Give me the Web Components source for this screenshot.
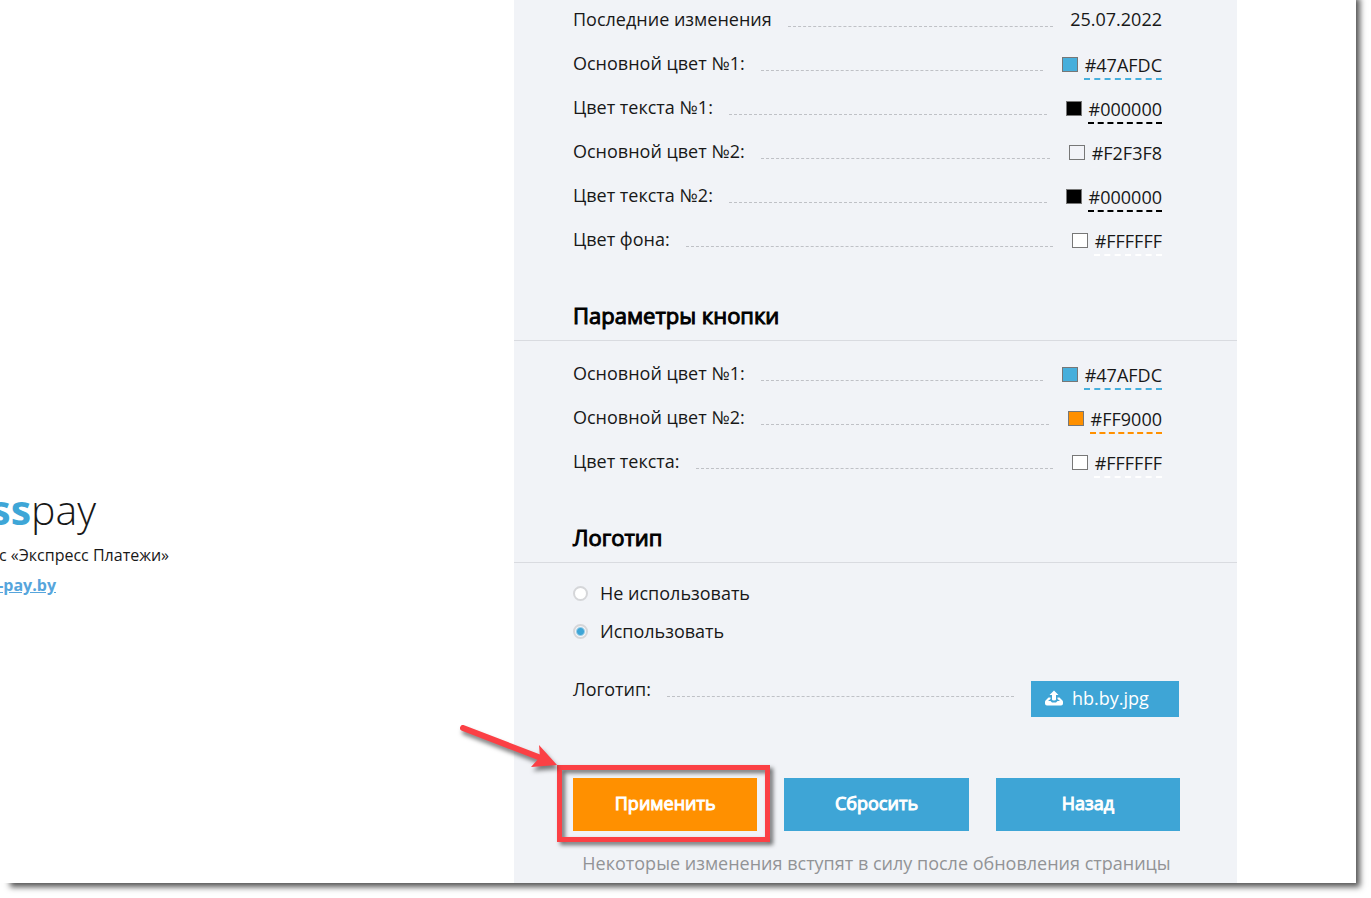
<!DOCTYPE html>
<html lang="ru">
<head>
<meta charset="utf-8">
<title>Express Pay</title>
<style>
body {
  margin: 0;
  background: #fff;
  color: #181818;
  font-family: "Open Sans", "Noto Sans", sans-serif;
  font-weight: 400;
  font-size: 18px;
  overflow: hidden;
}
</style>
</head>
<body>
<settings-page>
  <brand-block slot="brand"></brand-block>
  <div>
    <param-row label="Последние изменения">25.07.2022</param-row>
    <param-row label="Основной цвет №1:" color="#47AFDC"></param-row>
    <param-row label="Цвет текста №1:" color="#000000"></param-row>
    <param-row label="Основной цвет №2:" color="#F2F3F8"></param-row>
    <param-row label="Цвет текста №2:" color="#000000"></param-row>
    <param-row label="Цвет фона:" color="#FFFFFF"></param-row>
  </div>
  <param-section heading="Параметры кнопки">
    <param-row label="Основной цвет №1:" color="#47AFDC"></param-row>
    <param-row label="Основной цвет №2:" color="#FF9000"></param-row>
    <param-row label="Цвет текста:" color="#FFFFFF"></param-row>
  </param-section>
  <param-section heading="Логотип">
    <logo-choice></logo-choice>
    <param-row label="Логотип:" wide><upload-button>hb.by.jpg</upload-button></param-row>
  </param-section>
  <form-actions>Некоторые изменения вступят в силу после обновления страницы</form-actions>
</settings-page>

<script>
class SettingsPage extends HTMLElement {
  constructor() {
    super();
    this.attachShadow({ mode: "open" }).innerHTML = `
<style>
:host {
  display: grid;
  grid-template-columns: minmax(0, 514fr) minmax(0, 723fr) minmax(0, 119fr);
  box-sizing: border-box;
  min-height: calc(100vh - 3px);
  margin: -12px 15px 15px 0;
  padding-top: 12px;
  background: #fff;
  box-shadow: 7px 7px 6px -3px #555;
}
main {
  background: #f1f3f7;
}
</style>
<aside><slot name="brand"></slot></aside>
<main><slot></slot></main>
`;
  }
}

class BrandBlock extends HTMLElement {
  constructor() {
    super();
    this.attachShadow({ mode: "open" }).innerHTML = `
<style>
:host {
  display: block;
  padding-top: 480px;
  overflow: hidden;
  white-space: nowrap;
}
div {
  display: flex;
  justify-content: flex-end;
}
.logo {
  width: 96px;
  font-size: 41px;
  line-height: 58px;
  padding-bottom: 2px;
  font-weight: 300;
}
.logo b {
  color: #3ea6d7;
  font-weight: 700;
}
.name {
  width: 169px;
  font-size: 16px;
  line-height: 30px;
}
.link {
  width: 56px;
  font-size: 16px;
  line-height: 30px;
}
a {
  color: #56a5dc;
  font-weight: 700;
}
</style>
<div class="logo"><b>ss</b><span>pay</span></div>
<div class="name">ис «Экспресс Платежи»</div>
<div class="link"><a href="#">-pay.by</a></div>
`;
  }
}

class ParamSection extends HTMLElement {
  constructor() {
    super();
    this.attachShadow({ mode: "open" }).innerHTML = `
<style>
:host {
  display: block;
}
h2 {
  margin: 0 0 13px;
  padding: 34px 59px 8px;
  border-bottom: 1px solid #d9dbe0;
  color: #000;
  font-size: 22px;
  line-height: 34px;
  font-weight: 400;
  -webkit-text-stroke: 1px currentColor;
}
</style>
<h2>${this.getAttribute("heading")}</h2>
<slot></slot>
`;
  }
}

class ParamRow extends HTMLElement {
  constructor() {
    super();
    const label = this.getAttribute("label");
    const color = this.getAttribute("color");
    const value = color
      ? `<input id="color" type="color" value="${color}"><span class="code">${color}</span>`
      : `<span class="plain"><slot></slot></span>`;

    this.attachShadow({ mode: "open" }).innerHTML = `
<style>
:host {
  display: flex;
  align-items: flex-start;
  height: 44px;
  padding: 0 75px 0 59px;
  line-height: 38px;
}
:host([wide]) {
  padding-right: 58px;
}
.leader {
  flex: 1;
  height: 26px;
  margin: 0 17px 0 16px;
  border-bottom: 1px dashed #bfc1c6;
}
input {
  appearance: none;
  box-sizing: border-box;
  width: 16px;
  height: 15px;
  margin: 13px 6px 0 2px;
  padding: 0;
  border: 1px solid #777;
  background: none;
}
input::-webkit-color-swatch-wrapper {
  padding: 0;
}
input::-webkit-color-swatch {
  border: 0;
  border-radius: 0;
}
.code {
  margin-top: 9px;
  padding: 0 0 1px 1px;
  border-bottom: 2px dashed ${color || "transparent"};
  line-height: 24px;
}
</style>
${color ? `<label for="color">${label}</label>` : `<span>${label}</span>`}
<span class="leader"></span>
${value}
`;
  }
}

class LogoChoice extends HTMLElement {
  constructor() {
    super();
    this.attachShadow({ mode: "open" }).innerHTML = `
<style>
:host {
  display: block;
  margin: -2px 0 20px;
  padding: 0 59px;
}
label {
  display: flex;
  align-items: center;
  gap: 12px;
  line-height: 38px;
}
input {
  appearance: none;
  box-sizing: border-box;
  width: 15px;
  height: 15px;
  margin: 0;
  border: 2px solid #d5d6d9;
  border-radius: 50%;
  background: #fff;
}
input:checked {
  background: radial-gradient(circle, #3ea5d6 3px, #f4f5f8 5px);
}
</style>
<label><input type="radio" name="logo">Не использовать</label>
<label><input type="radio" name="logo" checked>Использовать</label>
`;
  }
}

class UploadButton extends HTMLElement {
  constructor() {
    super();
    this.attachShadow({ mode: "open" }).innerHTML = `
<style>
:host {
  display: block;
  padding-top: 11px;
}
button {
  display: flex;
  align-items: center;
  gap: 9px;
  box-sizing: border-box;
  width: 148px;
  height: 36px;
  padding: 0 14px 2px;
  border: 0;
  background: #3ea5d6;
  color: #fff;
  font: inherit;
}
svg {
  width: 18px;
  height: 16px;
  fill: #fff;
}
</style>
<button type="button">
  <svg viewBox="0 0 18 16" aria-hidden="true">
    <path d="M9 .5 13.500 5H11V9.500Q11 10.500 9 10.500T7 9.500V5H4.500Z"/>
    <path d="M3.500 7.500H5.500V9L3 11H5.500L7 12.500H11L12.500 11H15L12.500 9V7.500H14.500L17.500 10.500Q18 11 18 12V13.500Q18 15.500 16 15.500H2Q0 15.500 0 13.500V12Q0 11 .5 10.500Z"/>
  </svg>
  <slot></slot>
</button>
`;
  }
}

class FormActions extends HTMLElement {
  constructor() {
    super();
    this.attachShadow({ mode: "open" }).innerHTML = `
<style>
:host {
  display: block;
  padding: 64px 57px 0 59px;
}
.buttons {
  display: grid;
  grid-template-columns: repeat(3, 1fr);
  gap: 27px;
}
.marked {
  position: relative;
}
button {
  width: 100%;
  height: 53px;
  padding: 0 0 4px;
  border: 0;
  background: #3ea5d6;
  color: #fff;
  font: inherit;
  -webkit-text-stroke: 1px currentColor;
}
.primary {
  background: #ff9000;
}
.frame {
  position: absolute;
  inset: -13px -13px -11px -16px;
  border: 5px solid #fb4045;
  filter: drop-shadow(3px 3px 2px rgba(0, 0, 0, .55));
  pointer-events: none;
}
.arrow {
  position: absolute;
  left: -116px;
  top: -56px;
  width: 110px;
  height: 56px;
  filter: drop-shadow(2px 4px 2px rgba(0, 0, 0, .5));
  pointer-events: none;
}
p {
  margin: 17px 0 0;
  color: #929396;
  line-height: 30px;
  text-align: center;
  white-space: nowrap;
}
</style>
<div class="buttons">
  <div class="marked">
    <button class="primary" type="submit">Применить</button>
    <span class="frame"></span>
    <svg class="arrow" viewBox="0 0 110 56" aria-hidden="true">
      <path d="M6 6 84 36" stroke="#fb4045" stroke-width="6" stroke-linecap="round"/>
      <path d="M100 43 82 23 83 35 74 45Z" fill="#fb4045"/>
    </svg>
  </div>
  <button type="reset">Сбросить</button>
  <button type="button">Назад</button>
</div>
<p><slot></slot></p>
`;
  }
}

customElements.define("settings-page", SettingsPage);
customElements.define("brand-block", BrandBlock);
customElements.define("param-section", ParamSection);
customElements.define("param-row", ParamRow);
customElements.define("logo-choice", LogoChoice);
customElements.define("upload-button", UploadButton);
customElements.define("form-actions", FormActions);
</script>
</body>
</html>
